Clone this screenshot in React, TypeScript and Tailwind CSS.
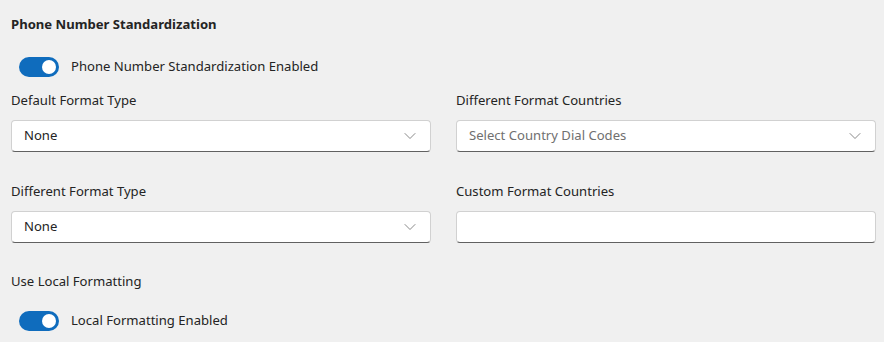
import { ChevronDown } from 'lucide-react';

function Toggle({ label }: { label: string }) {
  return (
    <div className="flex items-center h-[20px]">
      <div className="ml-[8px] w-[40px] h-[20px] rounded-full bg-[#0f6cbd] flex items-center justify-end pr-[3px]">
        <div className="w-[14px] h-[14px] rounded-full bg-white" />
      </div>
      <span className="ml-[12px] text-[13.1px] text-[#242424]">{label}</span>
    </div>
  );
}

function Field({ label, children }: { label: string; children: React.ReactNode }) {
  return (
    <div className="flex flex-col">
      <label className="text-[13.1px] leading-[20px] text-[#242424]">{label}</label>
      <div className="mt-[10px]">{children}</div>
    </div>
  );
}

function Dropdown({ value, placeholder }: { value?: string; placeholder?: string }) {
  return (
    <div className="h-[32px] bg-white rounded-[4px] border border-[#d1d1d1] border-b-[#616161] flex items-center pl-[12px] pr-[10px]">
      <span className={value ? 'flex-1 text-[13.1px] text-[#242424]' : 'flex-1 text-[13.1px] text-[#707070]'}>
        {value ?? placeholder}
      </span>
      <ChevronDown className="w-[20px] h-[20px] text-[#616161]" strokeWidth={0.9} />
    </div>
  );
}

export default function App() {
  return (
    <div
      className="w-[884px] h-[342px] bg-[#f0f0f0] pl-[11px] pr-[8px] pt-[14px] overflow-hidden"
      style={{ fontFamily: '"Segoe UI", "Noto Sans", sans-serif' }}
    >
      <h2 className="text-[13.1px] leading-[20px] font-bold text-[#242424]">Phone Number Standardization</h2>

      <div className="mt-[23px]">
        <Toggle label="Phone Number Standardization Enabled" />
      </div>

      <div className="mt-[13px] grid grid-cols-2 gap-x-[25px] gap-y-[29px]">
        <Field label="Default Format Type">
          <Dropdown value="None" />
        </Field>
        <Field label="Different Format Countries">
          <Dropdown placeholder="Select Country Dial Codes" />
        </Field>
        <Field label="Different Format Type">
          <Dropdown value="None" />
        </Field>
        <Field label="Custom Format Countries">
          <div className="h-[32px] bg-white rounded-[4px] border border-[#d1d1d1] border-b-[#616161]" />
        </Field>
      </div>

      <div className="mt-[28px] text-[13.1px] leading-[20px] text-[#242424]">Use Local Formatting</div>
      <div className="mt-[20px]">
        <Toggle label="Local Formatting Enabled" />
      </div>
    </div>
  );
}
